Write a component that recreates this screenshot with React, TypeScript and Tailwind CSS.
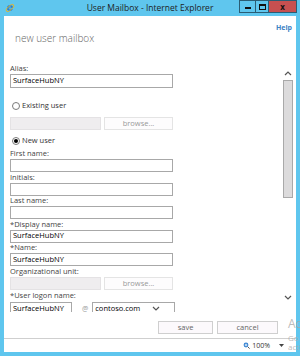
import React from 'react';

const Label = ({ children, className = '' }: { children: React.ReactNode; className?: string }) => (
  <div className={`h-[10.5px] flex items-center text-[7.5px] leading-none text-[#444] ${className}`}>{children}</div>
);

const TextBox = ({ value = '', className = 'w-[163px] h-[13px]' }: { value?: string; className?: string }) => (
  <div className={`border border-[#a8a8a8] bg-white flex items-center px-[2px] text-[7.5px] leading-none text-black ${className}`}>
    {value}
  </div>
);

const LookupRow = ({ className = '' }: { className?: string }) => (
  <div className={`flex gap-[3px] h-[13px] ${className}`}>
    <div className="w-[91px] bg-[#efedef] border border-[#e4e2e4]" />
    <div className="w-[69px] border border-[#e4e4e4] bg-[#fdfcfd] flex items-center justify-center text-[7.5px] text-[#999]">
      browse...
    </div>
  </div>
);

const Radio = ({ checked = false, label, className = '' }: { checked?: boolean; label: string; className?: string }) => (
  <div className={`flex items-center gap-[2px] h-[12px] pl-[2px] ${className}`}>
    <span className="w-[8px] h-[8px] rounded-full border border-[#7a7a7a] bg-white flex items-center justify-center">
      {checked && <span className="w-[4px] h-[4px] rounded-full bg-black" />}
    </span>
    <span className="text-[7.5px] leading-none text-[#333]">{label}</span>
  </div>
);

const IeIcon = () => (
  <svg width="10" height="10" viewBox="0 0 20 20">
    <path d="M10 4a6 6 0 1 0 5.6 8H12.2a3 3 0 0 1-5.1-1.3h8.8A6 6 0 0 0 10 4zm-2.9 5.2a3 3 0 0 1 5.8 0z" fill="#2a7fd0" />
    <ellipse cx="10" cy="10" rx="9.5" ry="4" transform="rotate(-40 10 10)" fill="none" stroke="#e8b422" strokeWidth="1.8" />
  </svg>
);

const TitleBar = () => (
  <div className="h-[16px] grid grid-cols-[1fr_auto_1fr] items-start shrink-0">
    <div className="pl-[5px] pt-[3px]">
      <IeIcon />
    </div>
    <div className="pt-[2px] text-[8.5px] leading-[12px] text-[#1e1e1e]">User Mailbox - Internet Explorer</div>
    <div className="flex justify-end pr-[3px]">
      <div className="w-[16px] h-[13px] border border-[#2a5d74] border-r-0 flex items-end justify-center pb-[3px]">
        <div className="w-[6px] h-[2px] bg-[#111]" />
      </div>
      <div className="w-[14px] h-[13px] border border-[#2a5d74] flex items-center justify-center">
        <div className="w-[7px] h-[6px] border border-[#111] border-t-2" />
      </div>
      <div className="w-[28px] h-[13px] bg-[#c75050] border border-[#2a5d74] border-l-0 flex items-center justify-center text-[8px] font-bold leading-none text-[#111]">
        x
      </div>
    </div>
  </div>
);

const Chevron = ({ up = false }: { up?: boolean }) => (
  <svg width="8" height="6" viewBox="0 0 8 6" className="mx-auto">
    <path d={up ? 'M1 5 L4 2 L7 5' : 'M1 1 L4 4 L7 1'} fill="none" stroke="#555" strokeWidth="1.2" />
  </svg>
);

export default function App() {
  return (
    <div className="w-[300px] h-[356px] bg-[#5fc6ee] flex flex-col overflow-hidden relative font-['Open_Sans','Noto_Sans',sans-serif]">
      <TitleBar />
      <div className="mx-[4px] flex-1 bg-white flex flex-col">
        <div className="h-[47px] flex justify-between items-start shrink-0">
          <div className="pl-[11px] pt-[15px] text-[10px] leading-[14px] font-light text-[#666]">new user mailbox</div>
          <div className="pr-[4px] pt-[7px] text-[7px] leading-[10px] font-bold text-[#3b82c4]">Help</div>
        </div>

        <div className="h-[249px] flex shrink-0">
          <div className="flex-1 pl-[6px] overflow-hidden">
            <Label className="mt-[0.5px]">Alias:</Label>
            <TextBox value="SurfaceHubNY" className="w-[163px] h-[14px]" />
            <Radio className="mt-[12px]" label="Existing user" />
            <LookupRow className="mt-[5px]" />
            <Radio checked className="mt-[5px]" label="New user" />
            <Label className="mt-[1.5px]">First name:</Label>
            <TextBox />
            <Label>Initials:</Label>
            <TextBox />
            <Label>Last name:</Label>
            <TextBox />
            <Label>*Display name:</Label>
            <TextBox value="SurfaceHubNY" />
            <Label>*Name:</Label>
            <TextBox value="SurfaceHubNY" />
            <Label>Organizational unit:</Label>
            <LookupRow className="mt-[0.5px]" />
            <Label className="mt-[0.5px]">*User logon name:</Label>
            <div className="flex items-start mt-[0.5px]">
              <TextBox value="SurfaceHubNY" className="w-[62px] h-[14px]" />
              <span className="ml-[10px] mt-[3px] text-[7px] leading-none text-[#999]">@</span>
              <div className="ml-[4px] w-[83px] h-[14px] border border-[#a8a8a8] flex items-center justify-between px-[2px]">
                <span className="text-[7.5px] leading-none text-black">contoso.com</span>
                <Chevron />
              </div>
            </div>
          </div>
          <div className="w-[16px] flex flex-col">
            <div className="mt-[7px] h-[6px] flex">
              <Chevron up />
            </div>
            <div className="ml-[3px] mt-[4px] w-[10px] h-[118px] bg-[#dcdbdc] border border-[#a9a9a9]" />
            <div className="mt-auto mb-[11px] h-[6px] flex">
              <Chevron />
            </div>
          </div>
        </div>

        <div className="h-[26px] flex justify-end items-start gap-[4px] pt-[9px] pr-[18px] shrink-0">
          <button className="w-[55px] h-[13px] border border-[#cfcfcf] bg-[#fcf9fc] text-[7.5px] leading-none text-[#666]">save</button>
          <button className="w-[61px] h-[13px] border border-[#cfcfcf] bg-[#fcf9fc] text-[7.5px] leading-none text-[#666]">cancel</button>
        </div>

        <div className="h-[14px] border-t border-[#cfcfcf] flex justify-end items-center pr-[12px] shrink-0">
          <svg width="7" height="7" viewBox="0 0 7 7">
            <circle cx="3" cy="3" r="2.4" fill="#3a86d4" />
            <path d="M1.8 3h2.4M3 1.8v2.4" stroke="#fff" strokeWidth="0.8" />
            <path d="M4.8 4.8L6.6 6.6" stroke="#555" strokeWidth="1" />
          </svg>
          <span className="ml-[2px] text-[7px] leading-none text-[#333]">100%</span>
          <svg width="5" height="3" viewBox="0 0 5 3" className="ml-[9px]">
            <path d="M0 0h5L2.5 3z" fill="#444" />
          </svg>
        </div>
      </div>
      <div className="h-[4px] shrink-0" />

      <div className="absolute left-[288px] top-[318px] text-[#a9a9a9]/80 whitespace-nowrap leading-none">
        <div className="text-[12px]">Activate Windows</div>
        <div className="mt-[4px] text-[8px]">Go to System in Control Panel to</div>
        <div className="mt-[1px] text-[8px]">activate Windows.</div>
      </div>
    </div>
  );
}
